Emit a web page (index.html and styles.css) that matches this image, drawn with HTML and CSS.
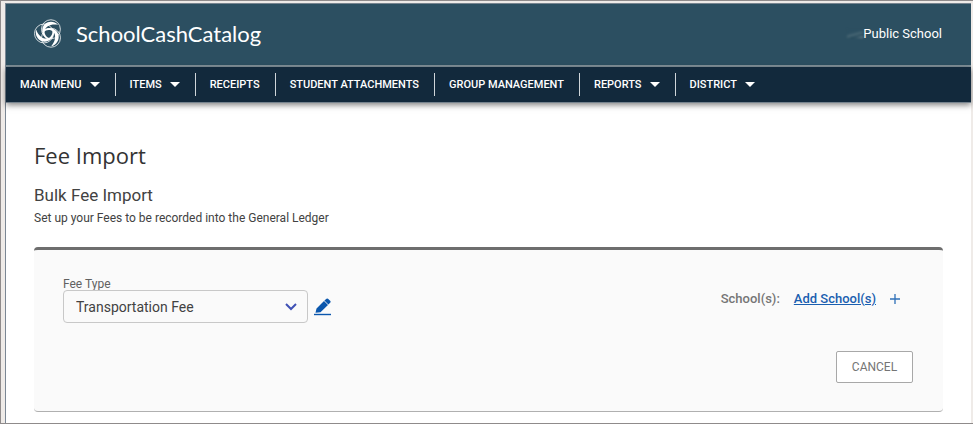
FILE: index.html
```html
<!DOCTYPE html>
<html lang="en">
<head>
    <meta charset="UTF-8">
    <meta name="viewport" content="width=device-width, initial-scale=1.0">
    <title>SchoolCashCatalog - Fee Import</title>
    <link rel="stylesheet" href="styles.css">
</head>
<body>
    <div class="page">
        <header class="header">
            <div class="brand">
                <svg class="logo" viewBox="0 0 30 30" aria-hidden="true">
                    <g fill="#fff">
                        <path id="blade" d="M25 6C21 2 15 2 11.500 5C7 9 7.500 17 13 20.500C14.500 21.500 16 21.500 17 21C12.500 19 10.500 15.500 11 12.500C11.500 7.500 18 4.500 25 6z"/>
                        <use href="#blade" transform="rotate(120 15 15)"/>
                        <use href="#blade" transform="rotate(240 15 15)"/>
                    </g>
                    <g fill="none" stroke="#fff" stroke-width="0.800">
                        <circle cx="17.500" cy="10.600" r="9.800"/>
                        <circle cx="17.600" cy="19.400" r="9.800"/>
                        <circle cx="10.300" cy="15" r="9.800"/>
                    </g>
                </svg>
                <span class="brand-name">SchoolCashCatalog</span>
            </div>
            <div class="school"><span class="smudge"></span>Public School</div>
        </header>

        <nav class="nav">
            <button class="caret">MAIN MENU</button>
            <button class="caret">ITEMS</button>
            <a href="#">RECEIPTS</a>
            <a href="#">STUDENT ATTACHMENTS</a>
            <a href="#">GROUP MANAGEMENT</a>
            <button class="caret">REPORTS</button>
            <button class="caret">DISTRICT</button>
        </nav>

        <main class="content">
            <h1>Fee Import</h1>
            <h2>Bulk Fee Import</h2>
            <p class="intro">Set up your Fees to be recorded into the General Ledger</p>

            <section class="card">
                <div class="row">
                    <div class="field">
                        <label for="feeType">Fee Type</label>
                        <div class="field-row">
                            <div class="select-wrap">
                                <select id="feeType">
                                    <option>Transportation Fee</option>
                                </select>
                                <svg class="chevron" viewBox="0 0 12 8" aria-hidden="true">
                                    <path d="M1 1l5 5l5-5" fill="none" stroke="#3f51b5" stroke-width="2"/>
                                </svg>
                            </div>
                            <button class="edit" aria-label="Edit fee type">
                                <svg viewBox="0 0 17 18" aria-hidden="true">
                                    <path d="M1.500 14.800L2.500 10.500L10 3L14 7L6.500 14.200zM10.400 2.600L12.500 0.700Q13.200 0.200 14 0.700L16.400 3Q16.900 3.700 16.400 4.500L14.400 6.600z" fill="#0b57ad"/>
                                    <path d="M0 16.500h17" stroke="#0b57ad" stroke-width="1.400"/>
                                </svg>
                            </button>
                        </div>
                    </div>
                    <div class="schools">
                        <span>School(s):</span>
                        <a href="#">Add School(s)</a>
                        <svg class="plus" viewBox="0 0 10 10" aria-hidden="true">
                            <path d="M0 5h10M5 0v10" stroke="#2f70b8" stroke-width="1.300"/>
                        </svg>
                    </div>
                </div>
                <div class="actions">
                    <button class="cancel">CANCEL</button>
                </div>
            </section>
        </main>
    </div>
</body>
</html>
```
FILE: styles.css
```css
* {
    box-sizing: border-box;
}

body {
    margin: 0;
    min-height: 100vh;
    display: flex;
    padding: 2px 2px 0 4px;
    border: 1px solid #8f8b8b;
    border-right: none;
    background-color: #efebe8;
    font-family: Roboto, Arial, sans-serif;
    color: #424242;
}

.page {
    flex: 1;
    border-left: 1px solid #7b8794;
    background-color: #fff;
}

button {
    font-family: inherit;
    cursor: pointer;
}

.header {
    display: flex;
    justify-content: space-between;
    align-items: center;
    height: 64px;
    padding: 0 29px 2px 28px;
    background-color: #2c4f61;
    border-top: 1px solid #77848f;
    border-bottom: 2px solid #82929b;
    color: #fff;
}

.brand {
    display: flex;
    align-items: center;
    gap: 13px;
}

.logo {
    width: 29px;
    height: 29px;
}

.brand-name {
    font-family: Lato, sans-serif;
    font-size: 22px;
    line-height: 28px;
}

.school {
    display: flex;
    align-items: center;
    font-size: 13px;
}

.smudge {
    width: 16px;
    height: 9px;
    background: linear-gradient(165deg, #2c4f61 40%, #4d6b78 60%, #1f4355 75%, #8799a2);
    filter: blur(1px);
}

.nav {
    display: flex;
    align-items: center;
    height: 36px;
    padding-bottom: 1px;
    background-color: #12293c;
    border-bottom: 1px solid #76838e;
    box-shadow: 0 2px 6px rgba(0, 0, 0, 0.5);
}

.nav a,
.nav button {
    display: flex;
    align-items: center;
    gap: 8px;
    height: 23px;
    padding: 0 15px 0 14px;
    border: none;
    border-right: 1px solid #cfd5d9;
    background: none;
    color: #fff;
    font-size: 11px;
    font-weight: 500;
    text-decoration: none;
    white-space: nowrap;
}

.nav button:last-child {
    border-right: none;
}

.caret::after {
    content: "";
    border: 5px solid transparent;
    border-top-color: #fff;
    border-bottom: none;
}

.content {
    padding: 37px 28px 8px;
}

h1 {
    margin: 0 0 15px;
    font-family: "Open Sans", sans-serif;
    font-size: 22px;
    line-height: 30px;
    font-weight: 400;
    color: #333;
}

h2 {
    margin: 0 0 4px;
    font-size: 17px;
    line-height: 20px;
    font-weight: 400;
}

.intro {
    margin: 0 0 20px;
    font-size: 12px;
    line-height: 18px;
}

.card {
    padding: 28px 30px 28px 29px;
    background-color: #fafafa;
    border-top: 3px solid #6e6e6e;
    border-bottom: 1px solid #b0b0b0;
    border-radius: 4px;
}

.row {
    display: flex;
    justify-content: space-between;
}

label {
    display: block;
    font-size: 12px;
    line-height: 12px;
    color: #616161;
}

.field-row {
    display: flex;
    align-items: center;
    gap: 6px;
}

.select-wrap {
    position: relative;
}

select {
    display: block;
    appearance: none;
    width: 245px;
    height: 33px;
    padding: 0 12px;
    border: 1px solid #c8c8c8;
    border-radius: 4px;
    background-color: #fafafa;
    color: #424242;
    font-family: inherit;
    font-size: 14px;
}

.chevron {
    position: absolute;
    top: 13px;
    right: 11px;
    width: 12px;
    height: 8px;
    pointer-events: none;
}

.edit {
    padding: 0;
    border: none;
    background: none;
}

.edit svg {
    display: block;
    width: 17px;
    height: 18px;
}

.schools {
    display: flex;
    align-items: center;
    gap: 14px;
    padding: 0 13px 4px 0;
    font-size: 13px;
    font-weight: 500;
    color: #757575;
}

.schools a {
    color: #1a5fb0;
}

.plus {
    width: 10px;
    height: 10px;
}

.actions {
    display: flex;
    justify-content: flex-end;
    margin-top: 28px;
}

.cancel {
    width: 77px;
    height: 32px;
    border: 1px solid #a8a8a8;
    border-radius: 2px;
    background-color: #fff;
    color: #757575;
    font-size: 12px;
}
```
